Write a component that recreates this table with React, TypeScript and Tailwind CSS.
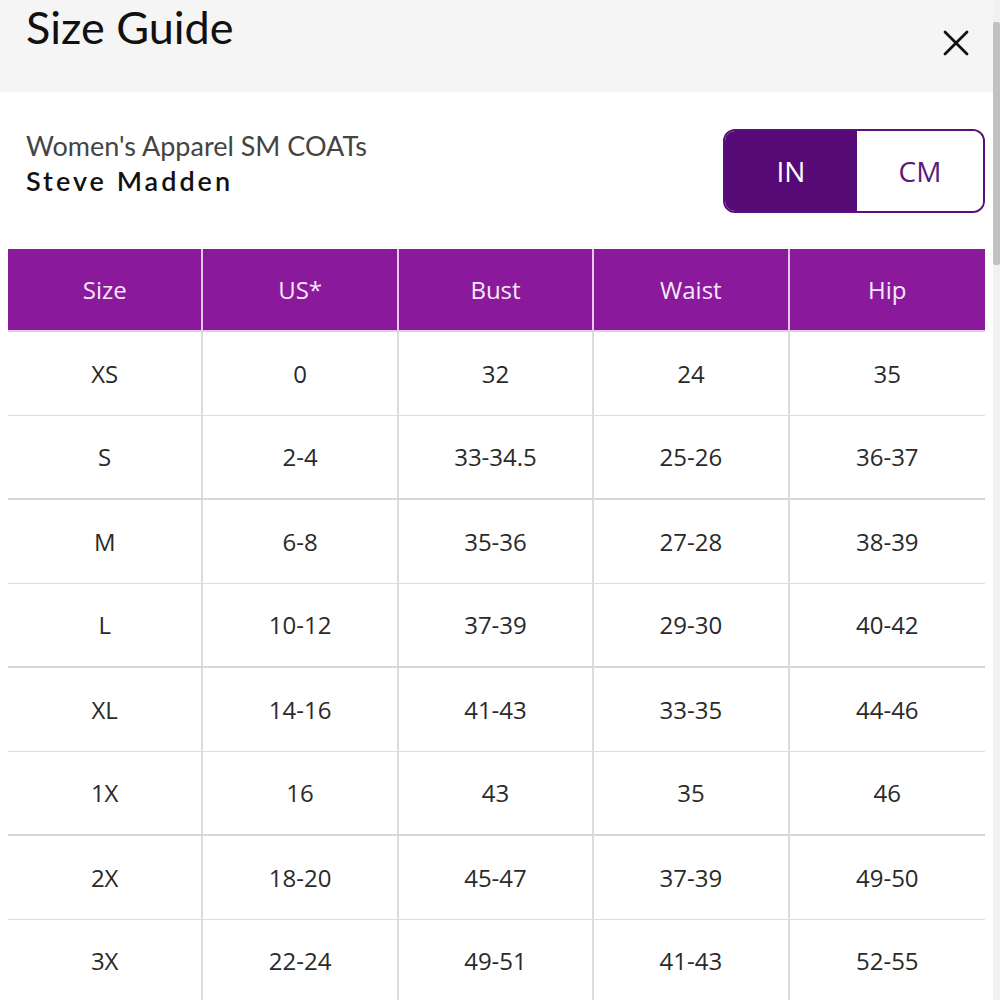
import { useState } from 'react';

const columns = ['Size', 'US*', 'Bust', 'Waist', 'Hip'];

const rows = [
  ['XS', '0', '32', '24', '35'],
  ['S', '2-4', '33-34.5', '25-26', '36-37'],
  ['M', '6-8', '35-36', '27-28', '38-39'],
  ['L', '10-12', '37-39', '29-30', '40-42'],
  ['XL', '14-16', '41-43', '33-35', '44-46'],
  ['1X', '16', '43', '35', '46'],
  ['2X', '18-20', '45-47', '37-39', '49-50'],
  ['3X', '22-24', '49-51', '41-43', '52-55'],
];

export default function App() {
  const [unit, setUnit] = useState<'in' | 'cm'>('in');

  return (
    <div className="flex h-[1000px] w-[1000px] overflow-hidden bg-white font-['Open_Sans',sans-serif] text-[#333]">
      <div className="flex w-[993px] flex-col">
        <header className="flex h-[92px] shrink-0 items-start justify-between bg-[#f5f5f5] pl-[26px] pr-[24px]">
          <h1 className="font-['Lato',sans-serif] text-[45px] leading-[55px] text-[#111]">Size Guide</h1>
          <button type="button" aria-label="Close" className="mt-[30px] text-[#111]">
            <svg width="26" height="26" viewBox="0 0 26 26" fill="none" stroke="currentColor" strokeWidth="2.8" strokeLinecap="round">
              <path d="M2 2 L24 24 M24 2 L2 24" />
            </svg>
          </button>
        </header>

        <div className="flex items-start justify-between pl-[26px] pr-[8px] pt-[37px]">
          <div>
            <div className="font-['Lato',sans-serif] text-[27px] leading-[34px] text-[#444]">Women's Apparel SM COATs</div>
            <div className="font-['Lato',sans-serif] text-[27px] font-semibold leading-[36px] tracking-[3px] text-[#111]">Steve Madden</div>
          </div>
          <div className="flex h-[84px] w-[262px] overflow-hidden rounded-[12px] border-2 border-[#5b0f7d]">
            <button
              type="button"
              onClick={() => setUnit('in')}
              className={unit === 'in' ? 'w-[132px] bg-[#560a75] text-[28px] text-white' : 'w-[132px] bg-white text-[28px] text-[#5a1a7a]'}
            >
              IN
            </button>
            <button
              type="button"
              onClick={() => setUnit('cm')}
              className={unit === 'cm' ? 'flex-1 bg-[#560a75] text-[28px] text-white' : 'flex-1 bg-white text-[28px] text-[#5a1a7a]'}
            >
              CM
            </button>
          </div>
        </div>

        <div className="ml-[8px] mt-[36px] w-[977px]">
          <div className="grid h-[83px] grid-cols-5 border-b-2 border-[#e3c9ea] bg-[#8a1a9b]">
            {columns.map((col, i) => (
              <div
                key={col}
                className={
                  i < columns.length - 1
                    ? 'flex items-center justify-center border-r-2 border-[#e3c9ea] text-[24px] text-[#f7e8fa]'
                    : 'flex items-center justify-center text-[24px] text-[#f7e8fa]'
                }
              >
                {col}
              </div>
            ))}
          </div>
          {rows.map((row, r) => (
            <div
              key={row[0]}
              className={
                r % 2 === 0
                  ? 'grid h-[84px] grid-cols-5 border-b border-[#dedede]'
                  : 'grid h-[84px] grid-cols-5 border-b-2 border-[#d6d6d6]'
              }
            >
              {row.map((cell, i) => (
                <div
                  key={i}
                  className={
                    i < row.length - 1
                      ? 'flex items-center justify-center border-r-2 border-[#dcdcdc] text-[24px] text-[#2a2a2a]'
                      : 'flex items-center justify-center text-[24px] text-[#2a2a2a]'
                  }
                >
                  {cell}
                </div>
              ))}
            </div>
          ))}
        </div>
      </div>

      <div className="flex w-[7px] flex-col bg-[#f1f1f1]">
        <div className="mt-[22px] h-[243px] rounded-[2px] bg-[#c1c1c1]" />
      </div>
    </div>
  );
}
